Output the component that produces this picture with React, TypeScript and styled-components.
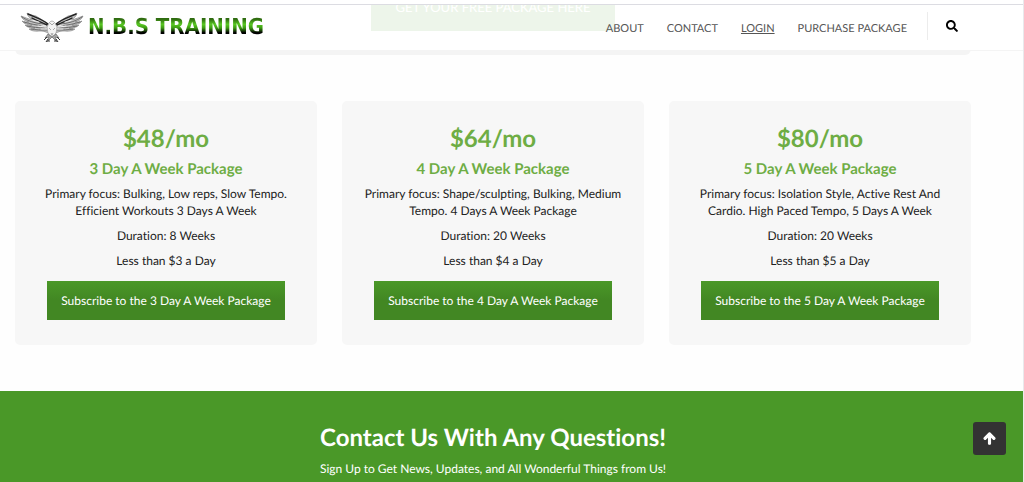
import React from "react";
import styled, { createGlobalStyle } from "styled-components";
import { FaArrowUp, FaSearch } from "react-icons/fa";

const GlobalStyle = createGlobalStyle`
  * { box-sizing: border-box; }
  body {
    margin: 0;
    background: #fefefe;
    color: #222;
    font: 12px/17px Lato, "Liberation Sans", sans-serif;
    font-variant-ligatures: none;
    text-rendering: geometricPrecision;
    overflow: hidden;
  }
  h1, h2, h3, p { margin: 0; }
`;

const Page = styled.div`
  min-height: 100vh;
  display: flex;
  flex-direction: column;
  border-right: 1px solid #e9e9ec;
`;

const TopEdge = styled.div`
  position: relative;
  z-index: 3;
  height: 5px;
  background: #fff;
  border-bottom: 1px solid #dcdce2;
`;

const Header = styled.header`
  position: sticky;
  top: 0;
  z-index: 2;
  display: flex;
  justify-content: space-between;
  height: 46px;
  padding: 0 52px 0 20px;
  background: rgba(255, 255, 255, 0.9);
  border-bottom: 1px solid #f4f4f4;
`;

const Brand = styled.a`
  display: flex;
  align-items: center;
  gap: 4px;
  text-decoration: none;
`;

const BrandName = styled.span`
  font: bold 22px/26px "DejaVu Sans Condensed", "DejaVu Sans", sans-serif;
  color: transparent;
  background: linear-gradient(#2f6b10 16%, #58c822 36%, #3c9a12 50%, #000 68%);
  background-clip: text;
`;

const Nav = styled.nav`
  display: flex;
  align-items: center;
  gap: 23px;
  padding-top: 2px;
`;

const NavLink = styled.a<{ $current?: boolean }>`
  color: #555;
  font-size: 11px;
  text-decoration: ${(p) => (p.$current ? "underline" : "none")};
`;

const SearchButton = styled.button`
  align-self: flex-start;
  display: flex;
  align-items: center;
  height: 28px;
  margin: 5px 0 0 -3px;
  padding: 0 13px 0 18px;
  border: 0;
  border-left: 1px solid #ececec;
  background: none;
  color: #000;
  font-size: 12px;
`;

const Offer = styled.section`
  display: flex;
  justify-content: center;
  margin: -68px 52px 0 15px;
  padding-bottom: 24px;
  border-radius: 6px;
  background: linear-gradient(transparent 68px, #f4f4f4 68px);
`;

const OfferLink = styled.a`
  padding: 16px 24px;
  background: #4a9828;
  color: #fff;
  font-size: 13px;
  line-height: 16px;
  text-decoration: none;
`;

const Plans = styled.main`
  display: grid;
  grid-template-columns: repeat(3, 1fr);
  gap: 25px;
  padding: 46px 52px 46px 15px;
`;

const Card = styled.article`
  display: flex;
  flex-direction: column;
  align-items: center;
  padding: 20px 16px 25px;
  border-radius: 5px;
  background: #f7f7f7;
  text-align: center;
`;

const Price = styled.h2`
  color: #6ead44;
  font-size: 24px;
  line-height: 36px;
`;

const PlanName = styled.h3`
  color: #6ead44;
  font-size: 15px;
  line-height: 24px;
`;

const Detail = styled.p`
  margin-top: 8px;
  &:first-of-type { margin-top: 4px; }
`;

const Subscribe = styled.button`
  margin-top: 12px;
  padding: 11px 14px;
  border: 0;
  background: linear-gradient(#4a9828, #428723 50%);
  color: #fff;
  font: inherit;
  text-rendering: inherit;
`;

const Contact = styled.section`
  flex: 1;
  padding: 30px 52px 5px 15px;
  background: #4a9828;
  color: #fff;
  text-align: center;
`;

const ContactTitle = styled.h2`
  font-size: 24px;
  line-height: 34px;
`;

const ContactText = styled.p`
  margin-top: 5px;
`;

const BackToTop = styled.button`
  position: fixed;
  right: 18px;
  bottom: 27px;
  z-index: 4;
  display: flex;
  align-items: center;
  justify-content: center;
  width: 33px;
  height: 33px;
  padding: 0;
  border: 0;
  border-radius: 3px;
  background: #333;
  color: #fff;
  font-size: 13px;
  svg { stroke: currentColor; stroke-width: 44px; }
`;

const plans = [
  { days: 3, price: 48, lines: ["Primary focus: Bulking, Low reps, Slow Tempo.", "Efficient Workouts 3 Days A Week"], weeks: 8 },
  { days: 4, price: 64, lines: ["Primary focus: Shape/sculpting, Bulking, Medium", "Tempo. 4 Days A Week Package"], weeks: 20 },
  { days: 5, price: 80, lines: ["Primary focus: Isolation Style, Active Rest And", "Cardio. High Paced Tempo, 5 Days A Week"], weeks: 20 },
];

const Wing = () => (
  <g strokeLinecap="round" strokeLinejoin="round">
    <path d="M29 13 C24 8 20 7 16 4 C12 3 9 3 7 1 C8 5 10 6 13 8 C8 7 4 5 1 4 C2 7 5 9 9 10 C6 10 4 10 2 9 C4 12 8 13 12 13 C9 14 7 14 5 13 C8 16 12 16 15 16 C13 17 11 17 9 17 C13 20 18 19 21 19 C24 19 26 20 28 21 Z" fill="#c4c4c4" stroke="#777" strokeWidth=".6" />
    <path d="M28 12 C22 7 17 6 8 2 M27 13 C21 10 17 9 12 6" fill="none" stroke="#222" strokeWidth="1.4" />
    <path d="M23 12 C14 11 8 9 2 5 M24 14 C16 13 10 12 4 10 M25 16 C18 16 13 15 7 14 M27 18 C21 18 16 18 11 17" fill="none" stroke="#555" strokeWidth=".8" />
    <path d="M26 14 L21 13 M25 15 L18 14 M27 17 L21 17 M19 10 L12 8" fill="none" stroke="#fff" strokeWidth=".8" />
  </g>
);

const Eagle = () => (
  <svg width="64" height="32" viewBox="0 0 64 32" aria-hidden="true">
    <Wing />
    <g transform="translate(64 0) scale(-1 1)"><Wing /></g>
    <path d="M29 11 Q32 7 35 11 L37 15 Q37 21 34 24 L30 24 Q27 21 27 15 Z" fill="#f2f2f2" stroke="#999" strokeWidth=".7" />
    <path d="M30 11 L32 13 L34 11 M29 16 L31 18 M35 16 L33 18 M31 21 L32 23 L33 21" fill="none" stroke="#888" strokeWidth=".7" />
    <path d="M28 22 L25 26 L29 25 L27 30 L32 25 L37 30 L35 25 L39 26 L36 22 L32 25 Z" fill="#aaa" stroke="#666" strokeWidth=".7" />
    <path d="M27 25 L24 28 M28 27 L26 30 M29 28 L29 30 M37 25 L40 28 M36 27 L38 30 M35 28 L35 30" stroke="#333" strokeWidth="1" />
  </svg>
);

export default function App() {
  return (
    <>
      <GlobalStyle />
      <Page>
        <TopEdge />
        <Header>
          <Brand href="#">
            <Eagle />
            <BrandName>N.B.S TRAINING</BrandName>
          </Brand>
          <Nav>
            <NavLink href="#about">ABOUT</NavLink>
            <NavLink href="#contact">CONTACT</NavLink>
            <NavLink href="#login" $current>LOGIN</NavLink>
            <NavLink href="#purchase">PURCHASE PACKAGE</NavLink>
            <SearchButton aria-label="Search"><FaSearch /></SearchButton>
          </Nav>
        </Header>
        <Offer>
          <OfferLink href="#free">GET YOUR FREE PACKAGE HERE</OfferLink>
        </Offer>
        <Plans>
          {plans.map((plan) => (
            <Card key={plan.days}>
              <Price>${plan.price}/mo</Price>
              <PlanName>{plan.days} Day A Week Package</PlanName>
              <Detail>{plan.lines[0]}<br />{plan.lines[1]}</Detail>
              <Detail>Duration: {plan.weeks} Weeks</Detail>
              <Detail>Less than ${plan.days} a Day</Detail>
              <Subscribe>Subscribe to the {plan.days} Day A Week Package</Subscribe>
            </Card>
          ))}
        </Plans>
        <Contact id="contact">
          <ContactTitle>Contact Us With Any Questions!</ContactTitle>
          <ContactText>Sign Up to Get News, Updates, and All Wonderful Things from Us!</ContactText>
        </Contact>
        <BackToTop aria-label="Back to top"><FaArrowUp /></BackToTop>
      </Page>
    </>
  );
}
